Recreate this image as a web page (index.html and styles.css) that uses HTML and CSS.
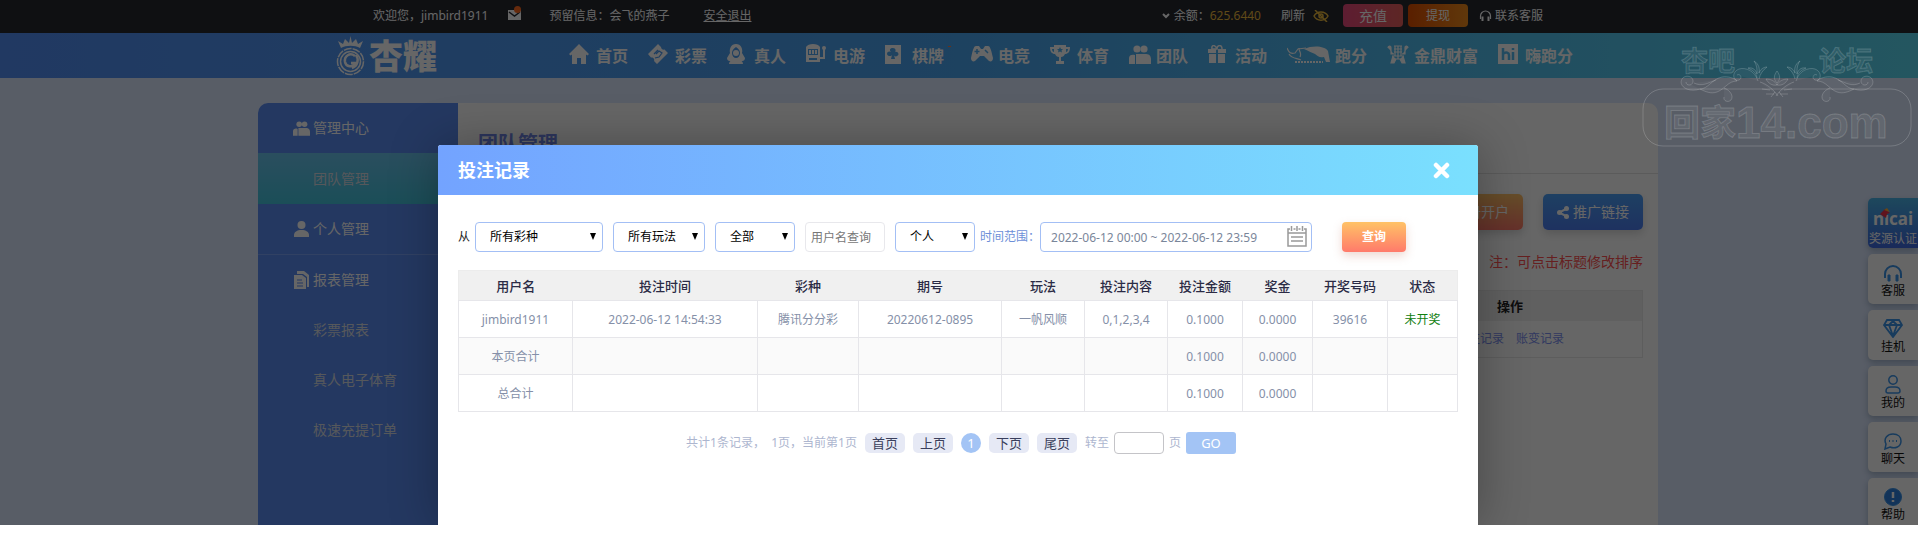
FILE: index.html
```html
<!DOCTYPE html>
<html lang="zh-CN">
<head>
  <meta charset="UTF-8">
  <meta name="viewport" content="width=device-width, initial-scale=1.0">
  <title>团队管理 - 投注记录</title>
  <link rel="stylesheet" href="styles.css">
</head>
<body>
  <div class="page">
    <header class="topbar">
      <div class="topbar-inner">
        <span class="welcome">欢迎您，jimbird1911</span>
        <a href="#" class="mail" aria-label="消息">
          <svg width="13" height="14" viewBox="0 0 13 14"><path d="M0 4h13v10H0z" fill="#fff"/><path d="M1 6l5.500 4 5.500-4" fill="none" stroke="#26282f" stroke-width="1.500"/><circle cx="9.500" cy="3.500" r="3.500" fill="#ff6a1f"/></svg>
        </a>
        <span>预留信息：会飞的燕子</span>
        <a href="#" class="logout">安全退出</a>
        <div class="account">
          <svg width="8" height="6" viewBox="0 0 8 6"><path d="M1 1l3 3 3-3" fill="none" stroke="#fff" stroke-width="2"/></svg>
          <span class="balance-label">余额：</span>
          <span class="balance">625.6440</span>
          <a href="#" class="refresh">刷新</a>
          <svg class="eye" width="16" height="12" viewBox="0 0 16 12" fill="none" stroke="#ecb93c" stroke-width="1.500"><path d="M1 6c3-5.500 11-5.500 14 0-3 5.500-11 5.500-14 0z"/><circle cx="8" cy="6" r="2"/><path d="M2 0l12 12"/></svg>
          <button type="button" class="btn-top recharge">充值</button>
          <button type="button" class="btn-top withdraw">提现</button>
          <a href="#" class="service">
            <svg width="13" height="12" viewBox="0 0 13 12"><path d="M1.500 9V6a5 5 0 0 1 10 0v3" fill="none" stroke="#fff" stroke-width="1.200"/><path d="M2.500 6.500h2V11h-2zM8.500 6.500h2V11h-2z" fill="#fff"/></svg>
            联系客服
          </a>
        </div>
      </div>
    </header>

    <div class="navbar">
      <div class="navbar-inner">
        <a href="#" class="logo">
          <svg width="31" height="40" viewBox="0 0 31 40" fill="none" stroke="#fff">
            <path d="M6 12L3 5l5 3 2-5 4 4 1.500-7L17 7l4-4 2 5 5-3-3 7c-5-3-14-3-19 0z" fill="#fff" stroke="none"/>
            <circle cx="15.500" cy="25.500" r="13" stroke-width="1.500" stroke-dasharray="8 1"/>
            <circle cx="15.500" cy="25.500" r="10" stroke-width="1.500"/>
            <path d="M20 20c-5-4-11 0-10 6 1 5 8 6 10 1h-4M21 19c3 4 2 11-4 13" stroke-width="2.500"/>
          </svg>
          <span>杏耀</span>
        </a>
        <nav class="nav">
          <a href="#"><svg width="20" height="20" viewBox="0 0 20 20"><path d="M10 0l10 10-1.500 1.500-1.500-1V20h-5v-6H8v6H3v-9.500l-1.500 1L0 10z"/></svg>首页</a>
          <a href="#"><svg width="20" height="20" viewBox="0 0 20 20"><path d="M0 10L10 0l3 3c0 2 2 3 3.500 2.500L20 9 9 20l-3-3c1-2-1-4-3-3.500z"/><path d="M6 10l4-4M7 14l4-1 3-4-3-2-3 3" fill="none" stroke="#4a98f0" stroke-width="1.200"/></svg>彩票</a>
          <a href="#"><svg width="18" height="20" viewBox="0 0 18 20"><path d="M9 0c5 0 7 5 6 9l3 5c0 3-3 4-5 2 2 1 3 2 3 4H2c0-2 1-3 3-4-2 2-5 1-5-2l3-5C2 5 4 0 9 0z"/><path d="M9 3c-3 2-4 4-4 6 0 3 2 5 4 5s4-2 4-5c0-2-1-4-4-6zM6 17h6" fill="#4a9cf0"/><circle cx="9" cy="9" r="3"/></svg>真人</a>
          <a href="#"><svg width="20" height="20" viewBox="0 0 20 20"><path d="M0 3c2-4 12-4 14 0v15H0z"/><path d="M2 5h10v6H2zM3 14h8v2H3z" fill="#4ea6f0"/><path d="M3 6h2v4H3zM6 6h2v4H6zM9 6h2v4H9z"/><path d="M14 14h4V5" fill="none" stroke="#fff" stroke-width="2"/><circle cx="18" cy="4" r="2"/></svg>电游</a>
          <a href="#" class="has-mark"><svg width="16" height="19" viewBox="0 0 16 19"><path d="M0 0h16v19H0z"/><path d="M8 3c3 0 3 3 2 4 3-1 5 3 2 4-1 1-3 0-3-1l1 4H6l1-4c-1 2-5 1-5-1 0-3 3-3 4-2-2-2-1-4 2-4z" fill="#4ea8f0"/></svg>棋牌</a>
          <a href="#"><svg width="22" height="16" viewBox="0 0 22 16"><path d="M5 0h3l2 3h2l2-3h3c2 0 3 3 5 12 0 3-2 4-4 3l-5-5H9l-5 5c-2 1-4 0-4-3C2 3 3 0 5 0z"/><path d="M6 3v5M3.500 5.500h5M14 4l3 3" stroke="#50adf2" stroke-width="1.500"/></svg>电竞</a>
          <a href="#"><svg width="20" height="19" viewBox="0 0 20 19"><path d="M4 0h12v2h4c0 5-2 7-5 7-1 2-2 3-4 3v4h3v3H6v-3h3v-4c-2 0-3-1-4-3-3 0-5-2-5-7h4z"/><path d="M10 2l1 2h2l-1.500 1.500.500 2-2-1-2 1 .5-2L7 4h2zM2 4c0 2 1 3 2 3V4zM18 4c0 2-1 3-2 3V4z" fill="#52b2f2"/></svg>体育</a>
          <a href="#"><svg width="22" height="19" viewBox="0 0 22 19"><circle cx="8" cy="4" r="3.600"/><circle cx="15" cy="4" r="3.600"/><path d="M0 19v-6c0-3 3-4 6-3v9zM7 19V9h10c4 0 5 3 5 5v5z"/></svg>团队</a>
          <a href="#"><svg width="18" height="18" viewBox="0 0 18 18"><path d="M0 4h8v4H0zM10 4h8v4h-8zM1 9h7v9H1zM10 9h7v9h-7z"/><path d="M9 4C7-1 3 0 4 4h5c0-4 5-5 5 0" fill="none" stroke="#fff" stroke-width="1.500"/></svg>活动</a>
          <a href="#"><svg width="43" height="18" viewBox="0 0 43 18"><path d="M0 3c2 5 4 6 8 5l3-4 8-1M2 9c3 5 8 4 12 6M12 3c0 4 3 5 1 9" fill="none" stroke="#fff" stroke-width="1.200"/><path d="M17 4c9-4 21-3 24 2l2 11h-4l-2-5c-5 1-6-1-9-3-3-1-6-3-11-5z"/><path d="M8 17h28" stroke="#fff" stroke-width="2" stroke-dasharray="2 1"/></svg>跑分</a>
          <a href="#"><svg width="22" height="19" viewBox="0 0 22 19" fill="none" stroke="#fff" stroke-width="1.200"><path d="M1 3c0-2 3-3 3 0v6h3M21 3c0-2-3-3-3 0v6h-3M7 1h8M7 4h8M7 7h8M8 1v10M14 1v10M5 11h12M7 14h8M11 1v13M6 11l-2 7h3l2-4M16 11l2 7h-3l-2-4"/></svg>金鼎财富</a>
          <a href="#"><svg width="20" height="20" viewBox="0 0 20 20"><path d="M0 0h20v20H0z"/><path d="M5 4v12M5 10c3-3 6-1 6 1v5M15 8v8M15 4v2" fill="none" stroke="#56b8ef" stroke-width="2.500"/></svg>嗨跑分</a>
        </nav>
      </div>
    </div>

    <div class="layout">
      <aside class="sidebar">
        <a href="#" class="group"><svg width="17" height="15" viewBox="0 0 22 19"><circle cx="8" cy="4" r="3.600"/><circle cx="15" cy="4" r="3.600"/><path d="M0 19v-6c0-3 3-4 6-3v9zM7 19V9h10c4 0 5 3 5 5v5z"/></svg>管理中心</a>
        <a href="#" class="active">团队管理</a>
        <a href="#" class="group line"><svg width="15" height="16" viewBox="0 0 15 16"><circle cx="7.500" cy="4" r="4"/><path d="M0 16v-2c0-3 3-5 7.500-5S15 11 15 14v2z"/></svg>个人管理</a>
        <a href="#" class="group"><svg width="15" height="18" viewBox="0 0 15 18"><path d="M3 3V0h7l5 4v12h-2V6L9 3z"/><path d="M0 4h8l4 3v11H0z"/><path d="M3 9h5M3 12h6M3 15h6" stroke="#5a8cf3" stroke-width="1.200"/></svg>报表管理</a>
        <a href="#">彩票报表</a>
        <a href="#">真人电子体育</a>
        <a href="#">极速充提订单</a>
      </aside>
      <main class="content">
        <h1>团队管理</h1>
        <div class="actions">
          <button type="button" class="btn-action open"><svg width="12" height="13" viewBox="0 0 12 13"><circle cx="6" cy="3.500" r="3"/><path d="M0 13c0-7 12-7 12 0z"/></svg>注册开户</button>
          <button type="button" class="btn-action share"><svg width="12" height="13" viewBox="0 0 12 13"><path d="M10 2.500l-8 4 8 4" fill="none" stroke="#fff" stroke-width="2"/><circle cx="9.500" cy="2.500" r="2.500"/><circle cx="2.500" cy="6.500" r="2.500"/><circle cx="9.500" cy="10.500" r="2.500"/></svg>推广链接</button>
        </div>
        <p class="note">注：可点击标题修改排序</p>
        <table class="team-table">
          <thead><tr><th></th><th>操作</th></tr></thead>
          <tbody><tr><td></td><td><a href="#">投注记录</a><a href="#">账变记录</a></td></tr></tbody>
        </table>
      </main>
    </div>

    <div class="float-bar">
      <a href="#" class="nicai"><span class="brand">nicai<svg width="10" height="10" viewBox="0 0 10 10"><path d="M0 6l5-5 5 4-3 1-1 4-3-2z" fill="#f0324b"/><path d="M4 2l3-2 3 4-3-1z" fill="#ffb03a"/></svg></span>奖源认证</a>
      <a href="#"><svg width="18" height="17" viewBox="0 0 18 17"><path d="M1 13V9a8 8 0 0 1 16 0v4" stroke-width="2"/><path d="M4 10h2v6H4zM12 10h2v6h-2z" fill="#3b93e8"/></svg>客服</a>
      <a href="#"><svg width="20" height="19" viewBox="0 0 20 19" stroke-width="1.800"><path d="M4 1h12l3 5-9 12L1 6zM1 6h18M6 6l4 11 4-11M6 6l4-4 4 4"/></svg>挂机</a>
      <a href="#"><svg width="16" height="19" viewBox="0 0 16 19" stroke-width="1.500"><circle cx="8" cy="5" r="4.200"/><path d="M1 16c0-3 2-4 5-4h4c3 0 5 1 5 4 0 2-1 2-2 2H3c-1 0-2 0-2-2z"/></svg>我的</a>
      <a href="#"><svg width="18" height="17" viewBox="0 0 18 17" stroke-width="1.500"><path d="M1 16l1-5C-1 5 4 1 9 1c5 0 8 3 8 7 0 6-6 8-11 6z"/><path d="M5 8h1M8.500 8h1M12 8h1" stroke-width="2"/></svg>聊天</a>
      <a href="#"><svg width="18" height="18" viewBox="0 0 18 18"><circle cx="9" cy="9" r="8.500" fill="#2e80de"/><path d="M9 4v6M9 12v2" stroke="#fff" stroke-width="2.500"/></svg>帮助</a>
    </div>

    <div class="shade"></div>

    <section class="modal" role="dialog" aria-labelledby="modal-title">
      <div class="modal-head">
        <h2 id="modal-title">投注记录</h2>
        <button type="button" class="close" aria-label="关闭"><svg width="17" height="17" viewBox="0 0 17 17"><path d="M3 3l11 11M14 3L3 14" stroke="#fff" stroke-width="4.500" stroke-linecap="round"/></svg></button>
      </div>
      <div class="modal-body">
        <form class="filters">
          <label for="lottery">从</label>
          <span class="select lottery"><select id="lottery"><option>所有彩种</option></select></span>
          <span class="select play"><select aria-label="玩法"><option>所有玩法</option></select></span>
          <span class="select"><select aria-label="状态"><option>全部</option></select></span>
          <input type="text" class="user" aria-label="用户名" placeholder="用户名查询">
          <span class="select scope"><select aria-label="范围"><option>个人</option></select></span>
          <label for="range" class="range-label">时间范围：</label>
          <span class="range">
            <input type="text" id="range" value="2022-06-12 00:00 ~ 2022-06-12 23:59">
            <svg width="20" height="21" viewBox="0 0 20 21" fill="none" stroke="#999" stroke-width="1.500"><path d="M3 3H1v17h18V3h-2M6.500 3h2M11.500 3h2M4.500 0v5M10 0v5M15.500 0v5M1 7h18M4 11h12M4 15h12"/></svg>
          </span>
          <button type="button" class="search">查询</button>
        </form>

        <table class="records">
          <colgroup>
            <col class="c-user"><col class="c-time"><col class="c-type"><col class="c-issue"><col class="c-play"><col class="c-play"><col class="c-sum"><col class="c-win"><col class="c-sum"><col class="c-win">
          </colgroup>
          <thead>
            <tr><th>用户名</th><th>投注时间</th><th>彩种</th><th>期号</th><th>玩法</th><th>投注内容</th><th>投注金额</th><th>奖金</th><th>开奖号码</th><th>状态</th></tr>
          </thead>
          <tbody>
            <tr><td>jimbird1911</td><td>2022-06-12 14:54:33</td><td>腾讯分分彩</td><td>20220612-0895</td><td>一帆风顺</td><td>0,1,2,3,4</td><td>0.1000</td><td>0.0000</td><td>39616</td><td class="pending">未开奖</td></tr>
            <tr><td>本页合计</td><td></td><td></td><td></td><td></td><td></td><td>0.1000</td><td>0.0000</td><td></td><td></td></tr>
            <tr><td>总合计</td><td></td><td></td><td></td><td></td><td></td><td>0.1000</td><td>0.0000</td><td></td><td></td></tr>
          </tbody>
        </table>

        <div class="pager">
          <span class="total">共计1条记录，&nbsp; 1页，当前第1页</span>
          <a href="#">首页</a>
          <a href="#">上页</a>
          <span class="current">1</span>
          <a href="#">下页</a>
          <a href="#">尾页</a>
          <label for="goto">转至</label>
          <input type="text" id="goto">
          <span>页</span>
          <button type="button">GO</button>
        </div>
      </div>
    </section>

    <svg class="watermark" width="276" height="106" viewBox="0 0 276 106">
      <rect x="5" y="46" width="268" height="57" rx="20"/>
      <text class="wm-small" x="43" y="28">杏吧</text>
      <text class="wm-small" x="181" y="28">论坛</text>
      <text class="wm-han" x="26" y="93">回家</text>
      <text class="wm-latin" x="98" y="95">14.com</text>
      <g class="wm-leaf">
        <path d="M62 46c-12 4-22-3-18-10 3-5 12-3 11 3-1 4-7 4-7 0M62 46c8 0 12-10 22-12 6-1 12 1 15 4-9 0-12 8-20 11-6 2-11 0-17-3zM86 45c6 2 10 8 7 12-3 3-8 1-7-3M56 40c8 4 14 0 22-3"/>
        <path d="M216 46c12 4 22-3 18-10-3-5-12-3-11 3 1 4 7 4 7 0M216 46c-8 0-12-10-22-12-6-1-12 1-15 4 9 0 12 8 20 11 6 2 11 0 17-3zM192 45c-6 2-10 8-7 12 3 3 8 1 7-3M222 40c-8 4-14 0-22-3"/>
        <path d="M120 38c-3-10-12-14-19-12-8 3-6 13 0 11 4-2 1-7-2-5M119 35c-1-6-5-8-9-10 6-1 8 3 9 6 0-5 0-9-3-13 5 3 6 8 5 12 1-3 4-6 8-6-4 3-7 7-8 12"/>
        <path d="M158 38c3-10 12-14 19-12 8 3 6 13 0 11-4-2-1-7 2-5M159 35c1-6 5-8 9-10-6-1-8 3-9 6 0-5 0-9 3-13-5 3-6 8-5 12-1-3-4-6-8-6 4 3 7 7 8 12"/>
        <path d="M139 40c-4-4-3-8 0-12 3 4 4 8 0 12zM139 42c-5 1-9-2-11-6 5 0 9 2 11 6zM139 42c5 1 9-2 11-6-5 0-9 2-11 6zM122 39c7 2 14 8 18 14M156 39c-7 2-14 8-18 14M124 46l8 1M128 51l8 0M154 46l-8 1M150 51l-8 0M133 54l4-5M145 54l-4-5"/>
      </g>
    </svg>
  </div>
</body>
</html>
```
FILE: styles.css
```css
* {
  box-sizing: border-box;
}

body {
  margin: 0;
  background: #fff;
  font-family: "Noto Sans", "Noto Sans CJK SC", sans-serif;
  font-size: 12px;
  line-height: 18px;
}

a {
  color: inherit;
  text-decoration: none;
}

button, input, select {
  font: inherit;
}

button {
  border: none;
  padding: 0;
  cursor: pointer;
}

.page {
  position: relative;
  height: calc(100vh - 23px);
  overflow: hidden;
  background: #dce8ff;
}

/* top bar */
.topbar {
  background: #26282f;
  color: #fff;
}

.topbar-inner {
  display: flex;
  align-items: center;
  max-width: 1172px;
  height: 33px;
  margin: 0 auto;
  padding: 0 2px 2px 0;
}

.mail {
  display: flex;
  margin: 0 28px 6px 20px;
}

.logout {
  margin-left: 34px;
  text-decoration: underline;
}

.account {
  display: flex;
  align-items: center;
  margin-left: auto;
}

.balance-label {
  margin-left: 4px;
}

.balance {
  color: #ecb93c;
}

.refresh {
  margin-left: 20px;
}

.eye {
  margin: 0 14px 0 8px;
}

.btn-top {
  width: 60px;
  height: 23px;
  margin-right: 5px;
  border-radius: 4px;
  color: #fff;
}

.recharge {
  background: linear-gradient(90deg, #e8497c, #e8605c);
  font-size: 14px;
}

.withdraw {
  background: linear-gradient(90deg, #e04e00, #f08c1c);
}

.service {
  display: flex;
  align-items: center;
  gap: 3px;
  margin-left: 6px;
}

/* main navigation */
.navbar {
  background: linear-gradient(90deg, #538ff5, #4aa5f0 50%, #5ad7f0);
  color: #fff;
}

.navbar-inner {
  display: flex;
  align-items: center;
  justify-content: space-between;
  max-width: 1248px;
  height: 45px;
  margin: 0 auto;
  padding-right: 10px;
}

.logo {
  display: flex;
  align-items: center;
  gap: 3px;
  font-size: 34px;
  font-weight: 900;
  line-height: 40px;
}

.nav {
  display: flex;
  gap: 20px;
  font-size: 16px;
  font-weight: bold;
  line-height: 24px;
}

.nav a {
  display: flex;
  align-items: center;
  min-width: 59px;
}

.nav svg {
  margin-right: auto;
  margin-bottom: 3px;
  fill: currentColor;
}

.nav a:nth-child(10) {
  min-width: 80px;
}

.nav a:nth-child(11) {
  min-width: 91px;
}

.nav a:nth-child(12) {
  min-width: 75px;
}

.has-mark::after {
  content: "";
  width: 3px;
  height: 1px;
  margin: 0 0 18px 4px;
  background: #ff7a3c;
}

.nav .has-mark {
  min-width: 66px;
}

/* page body */
.layout {
  display: flex;
  max-width: 1400px;
  min-height: 500px;
  margin: 25px auto 0 calc(50% - 701px);
  border-radius: 10px;
  overflow: hidden;
  background: #fff;
}

.sidebar {
  width: 200px;
  background: #5a8cf3;
  color: #fff;
  font-size: 14px;
}

.sidebar a {
  display: flex;
  align-items: center;
  height: 50px;
  padding-left: 55px;
  color: #d8dce4;
}

.sidebar .group {
  gap: 3px;
  padding-left: 35px;
  color: #fff;
}

.sidebar svg {
  width: 17px;
  fill: #fff;
}

.sidebar .active {
  height: 51px;
  background: linear-gradient(#6ac2ec, #44c3dc);
}

.sidebar .line {
  height: 51px;
  border-bottom: 1px solid #7aa4f7;
}

.content {
  flex: 1;
  padding-top: 27px;
}

.content h1 {
  margin: 0;
  padding: 0 20px 15px;
  border-bottom: 1px solid #e4e4e4;
  color: #7088e8;
  font-size: 20px;
  line-height: 28px;
}

.actions {
  display: flex;
  justify-content: flex-end;
  gap: 20px;
  margin: 20px 15px 0;
}

.btn-action {
  display: flex;
  align-items: center;
  justify-content: center;
  gap: 4px;
  width: 100px;
  height: 36px;
  border-radius: 5px;
  color: #fff;
  font-size: 14px;
  box-shadow: 0 4px 8px rgba(0,0,0,0.15);
}

.btn-action svg {
  fill: #fff;
}

.open {
  background: linear-gradient(#ffc266, #ff7a6b);
}

.share {
  background: linear-gradient(#4ba0f5, #4c7cf0);
}

.note {
  margin: 22px 15px 18px;
  color: #ff5050;
  font-size: 14px;
  line-height: 20px;
  text-align: right;
}

.team-table {
  width: calc(100% - 35px);
  margin: 0 15px 0 20px;
  border: 1px solid #e8e8e8;
  border-spacing: 0;
  text-align: center;
}

.team-table th {
  height: 30px;
  padding: 0;
  background: #f0f0f0;
  color: #222;
  font-size: 13px;
}

.team-table th:last-child {
  width: 264px;
}

.team-table td {
  height: 36px;
  padding: 0;
  color: #7c90f0;
}

.team-table td a {
  margin: 0 6px;
}

/* floating tools on the right edge */
.float-bar {
  position: absolute;
  top: 198px;
  right: 0;
  display: flex;
  flex-direction: column;
  gap: 6px;
  width: 50px;
}

.float-bar a {
  display: flex;
  flex-direction: column;
  align-items: center;
  justify-content: flex-end;
  height: 50px;
  padding-bottom: 4px;
  border-radius: 5px 0 0 5px;
  background: #fff;
  color: #111;
  box-shadow: 0 3px 6px rgba(30,60,80,0.3);
}

.float-bar svg {
  fill: none;
  stroke: #3b93e8;
}

.float-bar .nicai {
  padding-bottom: 0;
  background: linear-gradient(#4ab4e8, #3f68e0);
  color: #fff;
  white-space: nowrap;
}

.brand {
  position: relative;
  font-size: 17px;
  font-weight: bold;
  line-height: 22px;
}

.brand svg {
  position: absolute;
  top: 0;
  left: 7px;
  stroke: none;
}

.shade {
  position: absolute;
  inset: 0;
  background: rgba(0,0,0,0.6);
}

/* bet record dialog */
.modal {
  position: absolute;
  top: 145px;
  bottom: 0;
  left: calc(50% - 521px);
  width: 1040px;
  border-radius: 3px 3px 0 0;
  background: #fff;
  box-shadow: 1px 1px 50px rgba(0,0,0,0.3);
}

.modal-head {
  display: flex;
  align-items: center;
  justify-content: space-between;
  height: 50px;
  padding: 0 28px 0 20px;
  border-radius: 3px 3px 0 0;
  background: linear-gradient(90deg, #73a3ff, #7ae0fe);
  color: #fff;
}

.modal-head h2 {
  margin: 0;
  font-size: 18px;
  line-height: 26px;
}

.close {
  display: flex;
  background: none;
}

.modal-body {
  padding: 27px 20px 0;
}

.filters {
  display: flex;
  align-items: center;
  gap: 10px;
  color: #222;
}

.filters input, .filters select {
  width: 100%;
  height: 30px;
  padding: 0 14px;
  border: 1px solid #a3bff5;
  border-radius: 4px;
  background: #fff;
  color: #000;
}

.filters label {
  margin-right: -5px;
}

.select {
  position: relative;
  width: 80px;
}

.select select {
  appearance: none;
}

.select::after {
  content: "";
  position: absolute;
  top: 11px;
  right: 7px;
  border: 3px solid transparent;
  border-top: 7px solid #000;
  border-bottom: none;
  pointer-events: none;
}

.lottery {
  width: 128px;
}

.play {
  width: 92px;
}

.filters .user {
  width: 80px;
  padding: 0 5px;
  border-color: #e8e8ec;
}

.user::placeholder {
  color: #777;
}

.scope {
  margin-right: -5px;
}

.filters .range-label {
  margin-right: -10px;
  color: #6d8fd8;
}

.range {
  position: relative;
  width: 272px;
}

.filters .range input {
  padding: 0 10px;
  color: #7a869a;
}

.range svg {
  position: absolute;
  top: 4px;
  right: 5px;
}

.search {
  width: 64px;
  height: 30px;
  margin-left: 20px;
  border-radius: 4px;
  background: linear-gradient(#ffc266, #ff7a6b);
  color: #fff;
  font-weight: bold;
  box-shadow: 0 4px 10px rgba(200,130,110,0.3);
}

.records {
  width: 100%;
  margin-top: 18px;
  border-collapse: collapse;
  table-layout: fixed;
  text-align: center;
}

.records th {
  height: 30px;
  padding: 0;
  background: #f0f0f0;
  color: #2b2b45;
  font-size: 13px;
  font-weight: 500;
}

.records thead {
  border: 1px solid #ececec;
}

.records td {
  height: 37px;
  padding: 2px 0 0;
  border: 1px solid #e6e6ea;
  color: #8590a8;
}

.records tbody tr:nth-child(2) {
  background: #fafafa;
}

.records .pending {
  color: #108010;
}

.c-user {
  width: 114px;
}

.c-time {
  width: 185px;
}

.c-type {
  width: 101px;
}

.c-issue {
  width: 143px;
}

.c-play {
  width: 83px;
}

.c-sum {
  width: 75px;
}

.c-win {
  width: 70px;
}

.pager {
  display: flex;
  align-items: center;
  justify-content: center;
  gap: 8px;
  margin-top: 20px;
  padding-left: 6px;
  color: #adb6cf;
}

.pager a {
  width: 40px;
  height: 20px;
  border-radius: 5px;
  background: #e6e9f5;
  color: #3a3f5c;
  font-size: 13px;
  line-height: 20px;
  text-align: center;
}

.current {
  width: 20px;
  height: 20px;
  border-radius: 50%;
  background: #a3c4f5;
  color: #fff;
  font-size: 13px;
  line-height: 20px;
  text-align: center;
}

.pager input {
  width: 50px;
  height: 22px;
  margin: 0 -3px;
  border: 1px solid #c4c4c8;
  border-radius: 4px;
}

.pager button {
  width: 50px;
  height: 22px;
  margin-left: -3px;
  border-radius: 3px;
  background: #a3c4f5;
  color: #fff;
  font-size: 13px;
}

.watermark {
  position: absolute;
  top: 43px;
  right: 4px;
  fill: none;
  stroke: rgba(255,255,255,0.18);
  pointer-events: none;
}

.watermark text {
  fill: rgba(255,255,255,0.06);
  font-weight: bold;
}

.wm-leaf {
  fill: rgba(255,255,255,0.04);
}

.wm-small {
  font-size: 27px;
}

.wm-han {
  font-size: 36px;
}

.wm-latin {
  font-family: "Liberation Sans", Arial, sans-serif;
  font-size: 44px;
}
```
